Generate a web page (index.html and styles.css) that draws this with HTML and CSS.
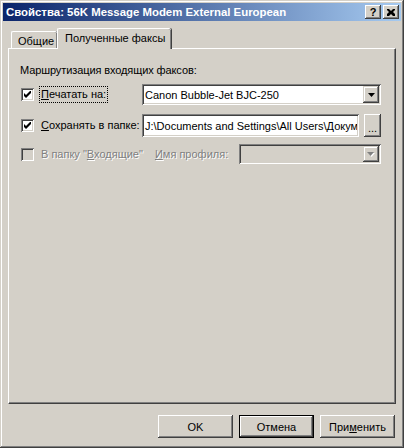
FILE: index.html
```html
<!DOCTYPE html>
<html>
<head>
<meta charset="utf-8">
<link rel="stylesheet" href="styles.css">
</head>
<body>
<div class="window">
  <div class="titlebar">
    <span class="title">Свойства: 56K Message Modem External European</span>
    <div class="tbtns">
      <div class="tbtn help">?</div>
      <div class="tbtn close"><svg width="8" height="7" viewBox="0 0 8 7"><path d="M0 0h2l2 2 2-2h2v1L6 3l2 2v2H6L4 5 2 7H0V5l2-2L0 1z" fill="#000"/></svg></div>
    </div>
  </div>
  <div class="tabstrip">
    <div class="tab">Общие</div>
    <div class="tab sel">Полученные факсы</div>
  </div>
  <div class="panel">
    <div class="group-title">Маршрутизация входящих факсов:</div>
    <div class="row r1">
      <div class="cbcell"><span class="cb"><svg width="7" height="7" viewBox="0 0 7 7"><path d="M0 2v3l2 2 5-5V-1L2 4z" fill="#000"/></svg></span><span class="lbl focus"><u>П</u>ечатать на:</span></div>
      <div class="combo"><span class="ctext">Canon Bubble-Jet BJC-250</span><span class="dd"><svg width="7" height="4" viewBox="0 0 7 4"><path d="M0 0h7L3.5 4z" fill="#000"/></svg></span></div>
    </div>
    <div class="row r2">
      <div class="cbcell"><span class="cb"><svg width="7" height="7" viewBox="0 0 7 7"><path d="M0 2v3l2 2 5-5V-1L2 4z" fill="#000"/></svg></span><span class="lbl"><u>С</u>охранять в папке:</span></div>
      <div class="edit"><span class="ctext">J:\Documents and Settings\All Users\Докум</span></div>
      <div class="dots">...</div>
    </div>
    <div class="row r3">
      <div class="cbcell dis wide"><span class="cb off"></span><span class="lbl">В папку "<u>В</u>ходящие"</span></div>
      <span class="lbl dis prof"><u>И</u>мя профиля:</span>
      <div class="combo off"><span class="ctext"></span><span class="dd"><svg width="8" height="5" viewBox="0 0 8 5"><path d="M1 1h7L4.5 5z" fill="#fff"/><path d="M0 0h7L3.5 4z" fill="#808080"/></svg></span></div>
    </div>
  </div>
  <div class="footer">
    <div class="btn">OK</div>
    <div class="btn def">Отмена</div>
    <div class="btn">При<u>м</u>енить</div>
  </div>
</div>
</body>
</html>
```
FILE: styles.css
```css
* { box-sizing: border-box; }
html, body { margin: 0; padding: 0; }
body {
  background: #d4d0c8;
  font-family: "Liberation Sans", Arial, sans-serif;
  font-size: 11px;
  color: #000;
}
.window {
  width: 404px;
  height: 448px;
  padding: 3px;
  background: #d4d0c8;
  box-shadow: inset -1px -1px #404040, inset 1px 1px #d4d0c8, inset -2px -2px #808080, inset 2px 2px #fff;
  display: flex;
  flex-direction: column;
}
.titlebar {
  height: 18px;
  background: linear-gradient(to right, #0a246a, #a6caf0);
  display: flex;
  align-items: center;
  justify-content: space-between;
  padding: 0 2px 0 2px;
}
.title {
  color: #fff;
  font-weight: bold;
  font-size: 11.4px;
  padding-left: 1px;
  white-space: nowrap;
}
.tbtns { display: flex; gap: 2px; }
.tbtn {
  width: 16px;
  height: 14px;
  background: #d4d0c8;
  box-shadow: inset -1px -1px #404040, inset 1px 1px #fff, inset -2px -2px #808080;
  display: flex;
  align-items: center;
  justify-content: center;
  font-weight: bold;
  font-size: 11px;
  line-height: 14px;
}
.tabstrip {
  height: 27px;
  display: flex;
  align-items: flex-end;
  padding-left: 8px;
  position: relative;
  z-index: 2;
}
.tab {
  height: 17px;
  padding: 1px 6px 0;
  display: flex;
  align-items: center;
  white-space: nowrap;
  border-top: 1px solid #fff;
  border-left: 1px solid #fff;
  border-radius: 2px 2px 0 0;
  box-shadow: inset -1px 0 #808080, 1px 0 #404040;
}
.tab:first-child { width: 46px; }
.tab.sel {
  height: 21px;
  width: 114px;
  margin-bottom: -1px;
  background: #d4d0c8;
  padding-left: 7px;
  padding-bottom: 3px;
}
.panel {
  margin: 0 5px;
  height: 356px;
  border-top: 1px solid #fff;
  border-left: 1px solid #fff;
  border-right: 1px solid #404040;
  border-bottom: 1px solid #404040;
  box-shadow: inset -1px -1px #808080;
  padding: 15px 14px 0 11px;
}
.group-title { height: 13px; line-height: 13px; letter-spacing: -0.1px; }
.row {
  display: flex;
  align-items: center;
}
.r1 { margin-top: 7px; height: 21px; }
.r2 { margin-top: 9px; height: 23px; }
.r3 { margin-top: 7px; height: 20px; }
.cbcell {
  width: 122px;
  display: flex;
  align-items: center;
  padding-left: 1px;
  flex: none;
}
.cbcell.wide { width: auto; }
.cb {
  width: 13px;
  height: 13px;
  background: #fff;
  box-shadow: inset 1px 1px #808080, inset -1px -1px #fff, inset 2px 2px #404040, inset -2px -2px #d4d0c8;
  display: flex;
  align-items: center;
  justify-content: center;
  flex: none;
}
.cb.off { background: #d4d0c8; }
.lbl {
  margin-left: 6px;
  white-space: nowrap;
  line-height: 13px;
  padding: 1px 1px;
}
.lbl.focus { outline: 1px dotted #000; outline-offset: 0; }
.dis, .dis .lbl { color: #808080; text-shadow: 1px 1px #fff; }
.lbl.prof { margin-left: 10px; width: 85px; flex: none; }
.combo, .edit {
  height: 100%;
  background: #fff;
  box-shadow: inset 1px 1px #808080, inset -1px -1px #fff, inset 2px 2px #404040, inset -2px -2px #d4d0c8;
  display: flex;
  align-items: center;
  padding: 2px;
  overflow: hidden;
  flex: 1;
}
.combo.off { background: #d4d0c8; }
.ctext {
  flex: 1;
  padding-left: 1px;
  white-space: nowrap;
  overflow: hidden;
}
.dd {
  width: 16px;
  height: 17px;
  background: #d4d0c8;
  box-shadow: inset -1px -1px #404040, inset 1px 1px #d4d0c8, inset -2px -2px #808080, inset 2px 2px #fff;
  display: flex;
  align-items: center;
  justify-content: center;
  flex: none;
}
.combo.off .dd { height: 16px; }
.edit { flex: none; width: 217px; }
.dots {
  width: 17px;
  height: 23px;
  margin-left: 5px;
  background: #d4d0c8;
  box-shadow: inset -1px -1px #404040, inset 1px 1px #fff, inset -2px -2px #808080;
  display: flex;
  align-items: flex-end;
  justify-content: center;
  padding-bottom: 5px;
  line-height: 8px;
}
.footer {
  display: flex;
  justify-content: flex-end;
  gap: 6px;
  margin-top: 11px;
  padding-right: 6px;
}
.btn {
  width: 75px;
  height: 23px;
  background: #d4d0c8;
  box-shadow: inset -1px -1px #404040, inset 1px 1px #fff, inset -2px -2px #808080;
  display: flex;
  align-items: center;
  justify-content: center;
  padding-top: 1px;
}
.btn.def {
  box-shadow: inset 0 0 0 1px #000, inset -2px -2px #404040, inset 2px 2px #fff, inset -3px -3px #808080;
}
u { text-decoration: underline; text-underline-offset: 1px; }
```
